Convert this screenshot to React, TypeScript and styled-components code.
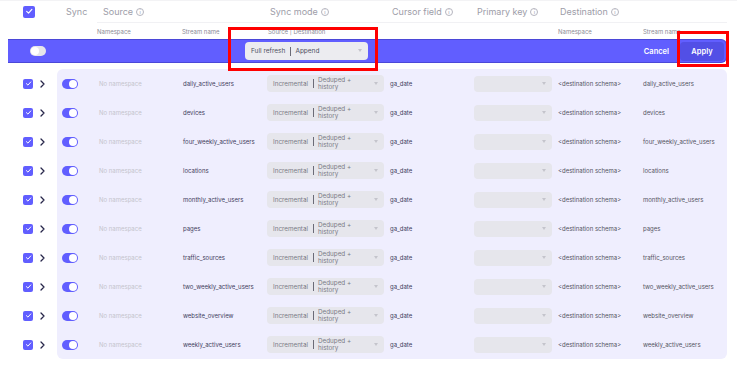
import React from "react";
import styled, { createGlobalStyle } from "styled-components";

const GlobalStyle = createGlobalStyle`
  html, body { margin: 0; padding: 0; background: #ffffff; }
  body { font-family: Inter, "Noto Sans", sans-serif; -webkit-font-smoothing: antialiased; }
  * { box-sizing: border-box; }
`;

const COLS = "40px 85px 85px 123px 84px 84px 85px 84px";
const PURPLE = "#615eff";

const Page = styled.div`
  position: relative;
  width: 737px;
  height: 371px;
  overflow: hidden;
`;

const HeaderRow = styled.div`
  display: grid;
  grid-template-columns: 57px ${COLS};
  height: 22px;
  align-items: center;
  border-top: 1px solid #f3f3f5;
`;

const HeaderCell = styled.div<{ $pad?: number; $span?: number }>`
  display: flex;
  align-items: center;
  gap: 3px;
  padding-left: ${(p) => p.$pad ?? 2}px;
  grid-column: span ${(p) => p.$span ?? 1};
  font-size: 9px;
  color: #9d9da8;
  white-space: nowrap;
`;

const SubHeaderRow = styled.div`
  display: grid;
  grid-template-columns: 97px 85px 85px 123px 84px 84px 85px 84px;
  height: 17px;
  align-items: center;
`;

const SubCell = styled.div<{ $pad?: number; $span?: number; $line?: boolean }>`
  grid-column: span ${(p) => p.$span ?? 1};
  padding-left: ${(p) => p.$pad ?? 0}px;
  font-size: 6px;
  color: #8b8b96;
  white-space: nowrap;
  height: 100%;
  display: flex;
  align-items: center;
  border-top: ${(p) => (p.$line ? "1px solid #f1f1f4" : "none")};
`;

const CheckBox = styled.span<{ $size: number }>`
  width: ${(p) => p.$size}px;
  height: ${(p) => p.$size}px;
  border-radius: 2px;
  background: ${PURPLE};
  display: inline-flex;
  align-items: center;
  justify-content: center;
  flex: none;
`;

const CheckCell = styled.div`
  padding-left: 23px;
  display: flex;
  align-items: center;
`;

const InfoIcon = styled.span`
  width: 8px;
  height: 8px;
  border-radius: 50%;
  border: 1px solid #b5b5bf;
  font-size: 5px;
  line-height: 6px;
  text-align: center;
  color: #b5b5bf;
  font-weight: 600;
`;

const BulkBar = styled.div`
  margin: 0 10px 0 8px;
  height: 24px;
  background: ${PURPLE};
  border: 1px solid #4b48d8;
  border-left: none;
  border-radius: 0 6px 6px 0;
  display: grid;
  grid-template-columns: 237px 123px 1fr auto auto;
  align-items: center;
`;

const BarToggleCell = styled.div`
  padding-left: 22px;
  display: flex;
  align-items: center;
`;

const Toggle = styled.span<{ $on?: boolean }>`
  width: 16px;
  height: 10px;
  border-radius: 5px;
  background: ${(p) => (p.$on ? PURPLE : "#e6e6ea")};
  position: relative;
  display: inline-block;
  &::after {
    content: "";
    position: absolute;
    top: 1px;
    ${(p) => (p.$on ? "right: 1px;" : "left: 1px;")}
    width: 8px;
    height: 8px;
    border-radius: 50%;
    background: #ffffff;
  }
`;

const Select = styled.div<{ $w: number; $h: number; $bg: string; $fs: number }>`
  width: ${(p) => p.$w}px;
  height: ${(p) => p.$h}px;
  background: ${(p) => p.$bg};
  border-radius: 4px;
  display: flex;
  align-items: center;
  padding: 0 6px;
  font-size: ${(p) => p.$fs}px;
  color: #7a7a86;
  position: relative;
`;

const DarkText = styled.span`
  color: #4f4f60;
`;

const Sep = styled.span`
  width: 1px;
  height: 9px;
  background: #6b6b77;
  margin: 0 4px 0 5px;
  flex: none;
`;

const Caret = styled.span`
  position: absolute;
  right: 6px;
  top: 50%;
  margin-top: -2px;
  width: 0;
  height: 0;
  border-left: 2.5px solid transparent;
  border-right: 2.5px solid transparent;
  border-top: 3px solid #c4c4cc;
`;

const CancelText = styled.span`
  color: #ffffff;
  font-size: 7.5px;
  font-weight: 600;
  margin-right: 11px;
`;

const ApplyButton = styled.button`
  width: 44px;
  height: 19px;
  margin-right: 2px;
  background: #524fe6;
  border: none;
  border-radius: 4px;
  color: #ffffff;
  font-family: inherit;
  font-size: 7.5px;
  font-weight: 600;
  padding: 0;
`;

const Body = styled.div`
  display: flex;
  margin-top: 6px;
`;

const SideColumn = styled.div`
  width: 57px;
  display: flex;
  flex-direction: column;
`;

const SideItem = styled.div`
  height: 29px;
  display: flex;
  align-items: center;
  padding-left: 23px;
  gap: 7px;
`;

const Panel = styled.div`
  width: 670px;
  background: #efeefe;
  border-radius: 6px;
`;

const Row = styled.div`
  display: grid;
  grid-template-columns: ${COLS};
  height: 29px;
  align-items: center;
`;

const Cell = styled.div<{ $tone?: "muted" | "dark" | "navy"; $pad?: number }>`
  font-size: 6px;
  white-space: nowrap;
  padding-left: ${(p) => p.$pad ?? 0}px;
  color: ${(p) =>
    p.$tone === "muted" ? "#c4c4cc" : p.$tone === "navy" ? "#3e3d5c" : "#54545f"};
  display: flex;
  align-items: center;
`;

const TwoLine = styled.span`
  line-height: 6.5px;
  white-space: normal;
  width: 44px;
`;

const RedBox = styled.div<{ $x: number; $y: number; $w: number; $h: number }>`
  position: absolute;
  left: ${(p) => p.$x}px;
  top: ${(p) => p.$y}px;
  width: ${(p) => p.$w}px;
  height: ${(p) => p.$h}px;
  border: 3px solid #ff0000;
  pointer-events: none;
`;

const Check = ({ s }: { s: number }) => (
  <svg width={s * 0.7} height={s * 0.7} viewBox="0 0 10 10">
    <path d="M2 5.2 L4.2 7.3 L8.2 2.8" stroke="#fff" strokeWidth="1.4" fill="none" strokeLinecap="round" strokeLinejoin="round" />
  </svg>
);

const Chevron = () => (
  <svg width="5" height="8" viewBox="0 0 5 8">
    <path d="M1 1 L4 4 L1 7" stroke="#27264a" strokeWidth="1.3" fill="none" strokeLinecap="round" strokeLinejoin="round" />
  </svg>
);

const streams = [
  "daily_active_users",
  "devices",
  "four_weekly_active_users",
  "locations",
  "monthly_active_users",
  "pages",
  "traffic_sources",
  "two_weekly_active_users",
  "website_overview",
  "weekly_active_users",
];

export default function App() {
  return (
    <Page>
      <GlobalStyle />
      <HeaderRow>
        <CheckCell>
          <CheckBox $size={12}>
            <Check s={12} />
          </CheckBox>
        </CheckCell>
        <HeaderCell $pad={9}>Sync</HeaderCell>
        <HeaderCell $pad={6} $span={2}>
          Source <InfoIcon>i</InfoIcon>
        </HeaderCell>
        <HeaderCell $pad={3}>
          Sync mode <InfoIcon>i</InfoIcon>
        </HeaderCell>
        <HeaderCell $pad={2}>
          Cursor field <InfoIcon>i</InfoIcon>
        </HeaderCell>
        <HeaderCell $pad={3}>
          Primary key <InfoIcon>i</InfoIcon>
        </HeaderCell>
        <HeaderCell $pad={2} $span={2}>
          Destination <InfoIcon>i</InfoIcon>
        </HeaderCell>
      </HeaderRow>
      <SubHeaderRow>
        <SubCell />
        <SubCell $line>Namespace</SubCell>
        <SubCell $line>Stream name</SubCell>
        <SubCell $line $pad={1}>Source | Destination</SubCell>
        <SubCell $line />
        <SubCell $line />
        <SubCell $line>Namespace</SubCell>
        <SubCell $line>Stream name</SubCell>
      </SubHeaderRow>
      <BulkBar>
        <BarToggleCell>
          <Toggle />
        </BarToggleCell>
        <Select $w={123} $h={18} $bg="#ececf0" $fs={6.5}>
          <DarkText>Full refresh</DarkText>
          <Sep />
          <DarkText>Append</DarkText>
          <Caret />
        </Select>
        <span />
        <CancelText>Cancel</CancelText>
        <ApplyButton>Apply</ApplyButton>
      </BulkBar>
      <Body>
        <SideColumn>
          {streams.map((s) => (
            <SideItem key={s}>
              <CheckBox $size={10}>
                <Check s={10} />
              </CheckBox>
              <Chevron />
            </SideItem>
          ))}
        </SideColumn>
        <Panel>
          {streams.map((s) => (
            <Row key={s}>
              <Cell $pad={5}>
                <Toggle $on />
              </Cell>
              <Cell $tone="muted" $pad={2}>No namespace</Cell>
              <Cell $tone="navy" $pad={1}>{s}</Cell>
              <Cell>
                <Select $w={117} $h={17} $bg="#e6e6ec" $fs={6.3}>
                  <span>Incremental</span>
                  <Sep />
                  <TwoLine>Deduped + history</TwoLine>
                  <Caret />
                </Select>
              </Cell>
              <Cell $tone="navy">ga_date</Cell>
              <Cell>
                <Select $w={78} $h={16} $bg="#e6e6ec" $fs={6.3}>
                  <Caret />
                </Select>
              </Cell>
              <Cell $tone="dark">&lt;destination schema&gt;</Cell>
              <Cell $tone="dark">{s}</Cell>
            </Row>
          ))}
        </Panel>
      </Body>
      <RedBox $x={228} $y={27} $w={150} $h={44} />
      <RedBox $x={677} $y={31} $w={52} $h={36} />
    </Page>
  );
}
